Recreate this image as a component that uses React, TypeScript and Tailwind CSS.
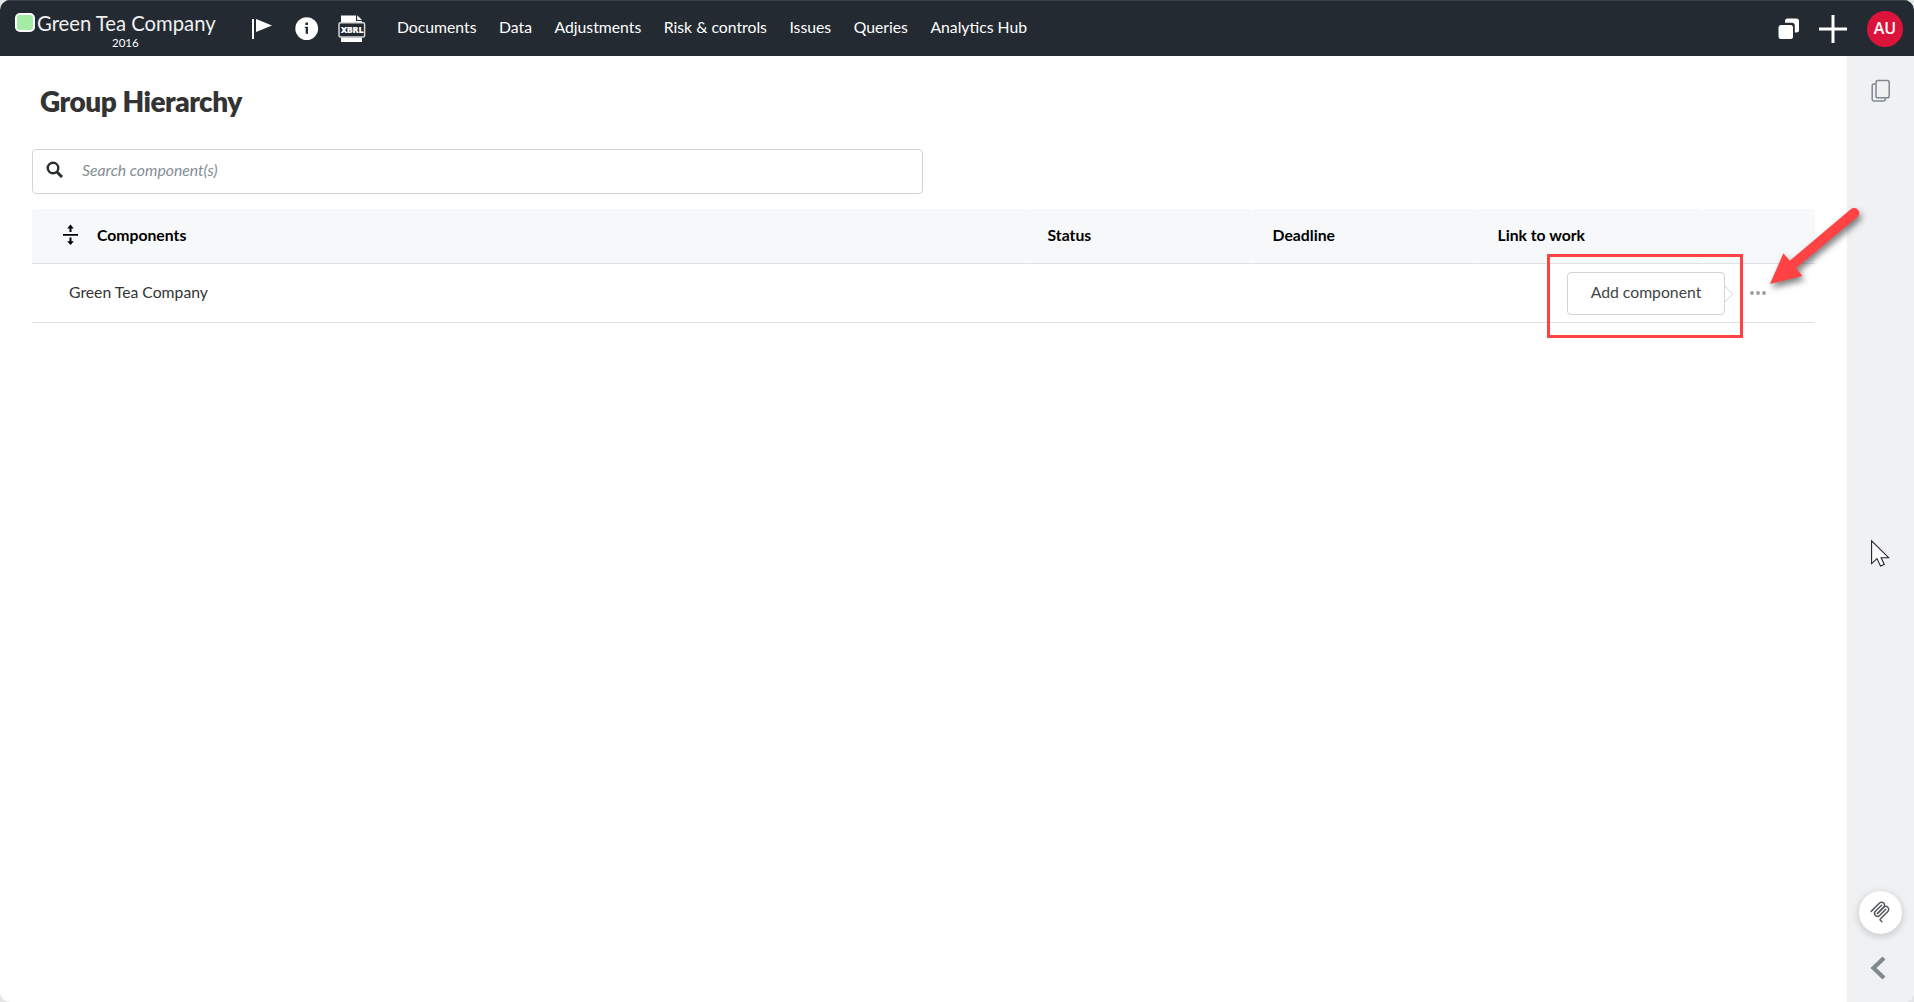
const navItems = ["Documents", "Data", "Adjustments", "Risk & controls", "Issues", "Queries", "Analytics Hub"];

function FlagIcon() {
  return (
    <svg width="22" height="22" viewBox="0 0 22 22" className="shrink-0">
      <path d="M2 1v20" stroke="#fff" strokeWidth="2" />
      <path d="M5 1 21 7.500 5 14z" fill="#fff" />
    </svg>
  );
}

function InfoIcon() {
  return (
    <svg width="24" height="24" viewBox="0 0 24 24" className="shrink-0">
      <circle cx="11.7" cy="11.600" r="11.4" fill="#fff" />
      <rect x="10.400" y="5.400" width="2.600" height="2.600" rx=".6" fill="#232a31" />
      <path d="M9.800 9.700h3.200v7h-2.300v-5.600h-.9z" fill="#232a31" />
    </svg>
  );
}

function XbrlIcon() {
  return (
    <div className="relative flex h-7 w-7 items-center justify-center">
      <svg width="28" height="28" viewBox="0 0 28 28" className="absolute inset-0">
        <path d="M3 7V.5h15v5.500h6V8H3zM19.200.300 24 5h-4.800zM3 22.500h21V27H3z" fill="#fff" />
        <rect x="1" y="7.800" width="25.600" height="14.300" rx="1.500" fill="#232a31" stroke="#d5d7d9" strokeWidth="1.500" />
      </svg>
      <span className="relative mt-[2px] font-['Open_Sans'] text-[9px] leading-none font-extrabold tracking-[-0.3px] text-white">XBRL</span>
    </div>
  );
}

function WindowsIcon() {
  return (
    <svg width="22" height="22" viewBox="0 0 22 22">
      <rect x=".5" y="7" width="14.5" height="14" rx="2.5" fill="#fff" />
      <path d="M7 4.8V3a2.5 2.5 0 0 1 2.5-2.5h9A2.5 2.5 0 0 1 21 3v9a2.5 2.5 0 0 1-2.5 2.5h-1.7V8A3.2 3.2 0 0 0 14 4.8z" fill="#fff" />
    </svg>
  );
}

function PagesIcon() {
  return (
    <svg width="20" height="24" viewBox="0 0 20 24" fill="none" stroke="#7f8990" strokeWidth="1.5">
      <rect x="5" y="1.6" width="13.2" height="17.2" rx="1.8" />
      <path d="M4.8 5H3a1.8 1.8 0 0 0-1.8 1.8v13.4A1.8 1.8 0 0 0 3 22h9.4a1.8 1.8 0 0 0 1.8-1.8V19" />
    </svg>
  );
}

function SplitIcon() {
  return (
    <svg width="16" height="22" viewBox="0 0 16 22" fill="#000">
      <path d="M7.500 .5 10.800 4.500H8.500V8H6.500V4.500H4.200zM0 10h15v1.700H0zM6.500 13.500h2V17.200h2.300L7.500 21 4.200 17.200H6.500z" />
    </svg>
  );
}

function CoilIcon() {
  return (
    <svg width="22" height="22" viewBox="0 0 180 180" fill="none" stroke="#55585a" strokeWidth="12" strokeLinecap="round">
      <path d="M18 84.853 85.882 16.971c9.373-9.373 24.569-9.373 33.941 0 9.373 9.372 9.373 24.568 0 33.941L68.558 102.177" />
      <path d="M69.265 101.470 119.823 50.912c9.373-9.373 24.569-9.373 33.942 0l.353.353c9.373 9.373 9.373 24.569 0 33.941L92.725 146.600c-3.124 3.124-3.124 8.189 0 11.313l12.606 12.607" />
      <path d="M102.853 33.941 52.648 84.146c-9.372 9.372-9.372 24.568 0 33.941 9.373 9.372 24.569 9.372 33.941 0L136.794 67.882" />
    </svg>
  );
}

function Cursor() {
  return (
    <svg width="20" height="28" viewBox="0 0 20 28" className="absolute top-[539px] left-[1871px]">
      <path d="M.6 1.800V24.600L6 19.600 9.500 27 13.300 25.400 10.100 18.700H17.600z" fill="#fff" stroke="#22222d" strokeWidth="1.100" />
    </svg>
  );
}

function CalloutArrow() {
  return (
    <svg width="110" height="96" viewBox="1762 200 110 96" className="absolute top-[200px] left-[1762px] drop-shadow-[2px_4px_3px_rgba(0,0,0,0.5)]">
      <path d="M1770 284 1783.400 253.300 1789.800 260.700 1850.700 209.200A5 5 0 0 1 1857.400 217L1796.200 268 1802.300 276z" fill="#ff4244" />
    </svg>
  );
}

export default function App() {
  return (
    <div className="relative h-[1002px] w-[1914px] overflow-hidden bg-[#e4e5e6] font-['Lato',sans-serif] text-[#333]">
      <div className="flex h-full flex-col overflow-hidden rounded-[10px] bg-white">
        <header className="flex h-14 shrink-0 items-center border-t border-[#3b434a] bg-[#232a31] text-white">
          <div className="flex h-full w-[216px] shrink-0 flex-col pt-[10px] pl-[14px]">
            <div className="flex h-[25px] items-start gap-[2px]">
              <span className="mt-[2px] ml-px h-[19px] w-5 shrink-0 rounded-[5px] border-2 border-white bg-[#a5eda5]" />
              <span className="text-[20.250px] leading-6 whitespace-nowrap text-[#f0f0f0]">Green Tea Company</span>
            </div>
            <span className="ml-[98px] text-[11.500px] leading-[14px]">2016</span>
          </div>
          <div className="ml-[35px] flex items-center">
            <FlagIcon />
            <div className="ml-[22px]"><InfoIcon /></div>
            <div className="ml-[19px]"><XbrlIcon /></div>
          </div>
          <nav className="ml-[31px] flex items-center gap-[22.500px] pb-[3px] text-[15.750px] whitespace-nowrap">
            {navItems.map((t) => (
              <a key={t}>{t}</a>
            ))}
          </nav>
          <div className="mr-[11px] ml-auto flex items-center">
            <WindowsIcon />
            <svg width="28" height="28" viewBox="0 0 28 28" className="ml-[19px]">
              <path d="M14 0v28M0 14h28" stroke="#fff" strokeWidth="3" />
            </svg>
            <div className="ml-5 flex size-9 items-center justify-center rounded-full bg-[#dc143c] pb-0.5 font-['Open_Sans'] text-[16px] font-semibold">AU</div>
          </div>
        </header>
        <div className="flex min-h-0 flex-1">
          <main className="flex-1 pl-8">
            <h1 className="mt-[27px] ml-2 text-[28px] leading-9 font-extrabold tracking-[-0.48px]">Group Hierarchy</h1>
            <div className="mt-[30px] flex h-[45px] w-[891px] items-center rounded-[4px] border border-[#d2d6dc] pl-[13px]">
              <svg width="17" height="17" viewBox="0 0 17 17" fill="none" stroke="#2b2e30" strokeWidth="2.400" className="mb-[4px]">
                <circle cx="7" cy="7" r="5.300" />
                <path d="m11 11 5 5" strokeWidth="3" />
              </svg>
              <span className="mb-[3px] ml-[19px] text-[15.750px] text-[#848d94] italic">Search component(s)</span>
            </div>
            <div className="mt-[15px] w-[1783px]">
              <div className="grid h-[55px] grid-cols-[995px_225px_225px_225px_113px] border-b border-[#dfe1e3] text-[15.750px] font-bold text-black">
                <div className="flex items-center rounded-[4px] bg-[#f6f8fa] pb-[2px] pl-[31px]">
                  <SplitIcon />
                  <span className="ml-[18px]">Components</span>
                </div>
                <div className="flex items-center rounded-[4px] bg-[#f6f8fa] pb-[2px] pl-[20.500px]">Status</div>
                <div className="flex items-center rounded-[4px] bg-[#f6f8fa] pb-[2px] pl-[20.500px]">Deadline</div>
                <div className="flex items-center rounded-[4px] bg-[#f6f8fa] pb-[2px] pl-[20.500px]">Link to work</div>
                <div className="rounded-[4px] bg-[#f6f8fa]" />
              </div>
              <div className="flex h-[59px] items-center border-b border-[#dfe1e3] pl-[37px] text-[15.750px]">
                <span className="mb-[3px]">Green Tea Company</span>
                <svg width="16" height="6" viewBox="0 0 16 6" fill="#999da1" className="mr-[49px] ml-auto">
                  <circle cx="2" cy="3" r="1.900" />
                  <circle cx="8" cy="3" r="1.900" />
                  <circle cx="14" cy="3" r="1.900" />
                </svg>
              </div>
            </div>
          </main>
          <aside className="flex w-[67px] flex-col items-center bg-[#f0f1f3] pt-[23px] pb-[22px]">
            <PagesIcon />
            <div className="mt-auto flex size-[43px] items-center justify-center rounded-full bg-white pr-px pb-px shadow-[0_2px_8px_rgba(0,0,0,0.2)]">
              <CoilIcon />
            </div>
            <svg width="18" height="24" viewBox="0 0 18 24" className="mt-[22px] mr-[5px]">
              <path d="M15 2 4.500 12 15 22" fill="none" stroke="#7f8990" strokeWidth="4.200" />
            </svg>
          </aside>
        </div>
      </div>
      <div className="absolute top-[272px] left-[1567px] flex h-[43px] w-[158px] items-center justify-center rounded-[4px] border border-[#d2d4d9] bg-white pb-[3px] text-[15.750px] text-[#444]">
        Add component
        <svg width="10" height="18" viewBox="0 0 10 18" className="absolute top-[12px] left-[156px]">
          <path d="M1 1 8.500 9 1 17" fill="#fff" stroke="#d2d4d9" />
        </svg>
      </div>
      <div className="absolute top-[254px] left-[1547px] h-[84px] w-[196px] border-3 border-[#ff4244]" />
      <CalloutArrow />
      <Cursor />
    </div>
  );
}
